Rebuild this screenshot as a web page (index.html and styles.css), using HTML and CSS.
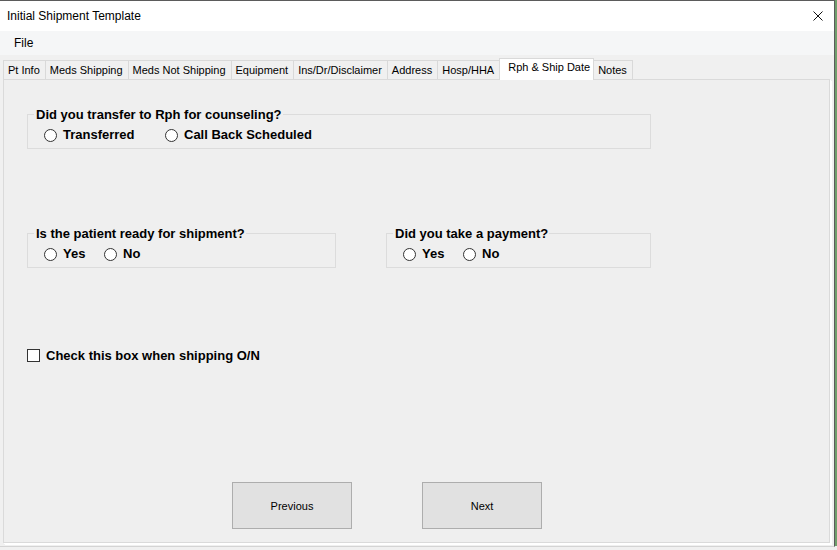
FILE: index.html
```html
<!DOCTYPE html>
<html>
<head>
<meta charset="utf-8">
<title>Initial Shipment Template</title>
<link rel="stylesheet" href="styles.css">
</head>
<body>
<div class="screen">
  <div class="window">
    <div class="titlebar">
      <span class="title">Initial Shipment Template</span>
      <svg class="close" width="10" height="10" viewBox="0 0 10 10"><path d="M0.5 0.5 L9.5 9.5 M9.5 0.5 L0.5 9.5" stroke="#111" stroke-width="1" fill="none"/></svg>
    </div>
    <div class="menubar"><span class="menu-item">File</span></div>
    <div class="tabarea">
      <div class="tabs">
        <div class="tab">Pt Info</div>
        <div class="tab">Meds Shipping</div>
        <div class="tab">Meds Not Shipping</div>
        <div class="tab">Equipment</div>
        <div class="tab">Ins/Dr/Disclaimer</div>
        <div class="tab">Address</div>
        <div class="tab">Hosp/HHA</div>
        <div class="tab active">Rph &amp; Ship Date</div>
        <div class="tab">Notes</div>
      </div>
      <div class="panel">
        <fieldset class="group g-wide">
          <legend>Did you transfer to Rph for counseling?</legend>
          <div class="options">
            <label class="radio r-wide"><span class="dot"></span>Transferred</label>
            <label class="radio"><span class="dot"></span>Call Back Scheduled</label>
          </div>
        </fieldset>
        <div class="group-row">
          <fieldset class="group g-left">
            <legend>Is the patient ready for shipment?</legend>
            <div class="options">
              <label class="radio r-yn"><span class="dot"></span>Yes</label>
              <label class="radio"><span class="dot"></span>No</label>
            </div>
          </fieldset>
          <fieldset class="group g-right">
            <legend>Did you take a payment?</legend>
            <div class="options">
              <label class="radio r-yn"><span class="dot"></span>Yes</label>
              <label class="radio"><span class="dot"></span>No</label>
            </div>
          </fieldset>
        </div>
        <label class="check"><span class="box"></span>Check this box when shipping O/N</label>
        <div class="buttons">
          <button class="btn">Previous</button>
          <button class="btn">Next</button>
        </div>
      </div>
    </div>
  </div>
  <div class="side"></div>
</div>
</body>
</html>
```

FILE: styles.css
```css
html, body {
  margin: 0;
  padding: 0;
}
body {
  background: #f0f0f0;
  font-family: "Liberation Sans", Arial, sans-serif;
  color: #000;
  width: 837px;
  height: 550px;
  overflow: hidden;
}
.screen {
  display: flex;
  height: 546px;
}
.window {
  width: 834px;
  height: 545px;
  border-top: 1px solid #5b5b5b;
  border-right: 1px solid #5b5b5b;
  border-bottom: 1px solid #d4d4d4;
  display: flex;
  flex-direction: column;
  background: #f0f0f0;
}
.side {
  flex: 1;
  background: #6f9f6c;
}
.titlebar {
  height: 30px;
  background: #fff;
  display: flex;
  align-items: center;
  justify-content: space-between;
  padding: 0 11px 0 7px;
  flex-shrink: 0;
}
.title {
  font-size: 12px;
}
.close {
  display: block;
  margin-bottom: 1px;
}
.menubar {
  height: 24px;
  background: #f5f6f7;
  display: flex;
  align-items: center;
  padding-left: 14px;
  flex-shrink: 0;
}
.menu-item {
  font-size: 12px;
}
.tabarea {
  flex: 1;
  display: flex;
  flex-direction: column;
  padding: 5px 4px 3px 3px;
  background: #f0f0f0;
}
.tabs {
  display: flex;
  align-items: flex-end;
  height: 19px;
  position: relative;
  z-index: 1;
}
.tab {
  height: 18px;
  line-height: 18px;
  font-size: 11px;
  padding: 0 5px 0 4px;
  border: 1px solid #d9d9d9;
  border-bottom: none;
  border-right: none;
  background: #f0f0f0;
  white-space: nowrap;
}
.tab:nth-last-child(1) {
  border-right: 1px solid #d9d9d9;
}
.tab.active {
  height: 21px;
  line-height: 17px;
  margin-bottom: -1px;
  background: #fff;
  padding: 0 3px 0 8px;
  border-right: 1px solid #d9d9d9;
}
.tab.active + .tab {
  border-left: none;
}
.panel {
  flex: 1;
  border: 1px solid #dadada;
  background: #efefef;
  box-shadow: 1px 1px 0 #fff, 2px 2px 0 #fff;
  padding: 27px 0 0 23px;
  display: flex;
  flex-direction: column;
  align-items: flex-start;
}
.group {
  margin: 0;
  padding: 0 0 6px 16px;
  border: 1px solid #dcdcdc;
  min-width: 0;
  box-sizing: border-box;
}
.group legend {
  font-size: 13px;
  font-weight: bold;
  line-height: 15px;
  padding: 0 1px 0 2px;
  margin-left: -10px;
}
.g-wide { width: 624px; }
.g-left { width: 309px; }
.g-right { width: 265px; }
.group-row {
  display: flex;
  gap: 50px;
  margin-top: 77px;
}
.options {
  display: flex;
  margin-top: 6px;
  height: 14px;
  align-items: center;
}
.radio {
  display: flex;
  align-items: center;
  font-size: 13px;
  font-weight: bold;
  line-height: 14px;
}
.r-wide { width: 121px; }
.r-yn { width: 60px; }
.dot {
  width: 11px;
  height: 11px;
  border: 1px solid #333;
  border-radius: 50%;
  background: #fff;
  margin-right: 6px;
  flex-shrink: 0;
}
.check {
  display: flex;
  align-items: center;
  margin-top: 80px;
  font-size: 13px;
  font-weight: bold;
  line-height: 15px;
}
.box {
  width: 11px;
  height: 11px;
  border: 1px solid #333;
  background: #fff;
  margin-right: 6px;
}
.buttons {
  display: flex;
  gap: 70px;
  margin: 119px 0 0 205px;
}
.btn {
  width: 120px;
  height: 47px;
  background: #e1e1e1;
  border: 1px solid #adadad;
  font-family: "Liberation Sans", Arial, sans-serif;
  font-size: 11px;
  color: #000;
  padding: 0;
}
```
